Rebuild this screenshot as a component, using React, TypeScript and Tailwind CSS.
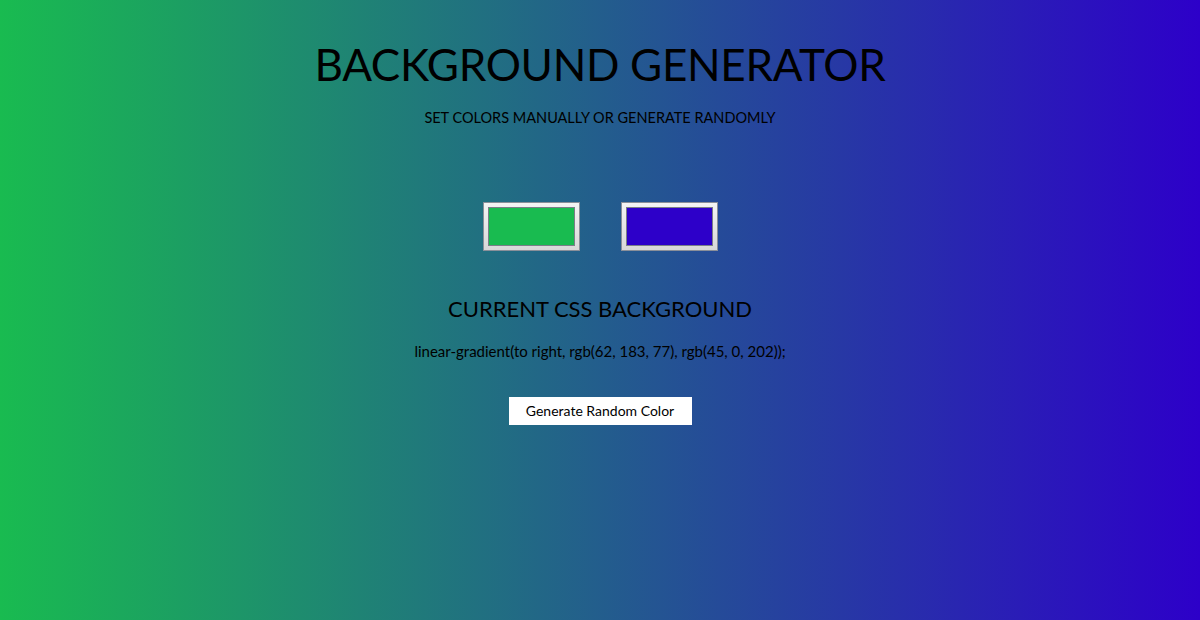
function Swatch({ color }: { color: string }) {
  return (
    <div className="w-[97px] h-[49px] border border-[#8a8f99] bg-gradient-to-b from-[#f4f4f4] to-[#d8d8d8] p-[4px]">
      <div className="w-full h-full border border-[#7a7f88]" style={{ backgroundColor: color }} />
    </div>
  )
}

export default function App() {
  const left = '#19bb50'
  const right = '#2d00c9'

  return (
    <div
      className="w-[1200px] h-[620px] flex flex-col items-center text-black text-center font-['Lato',sans-serif]"
      style={{ background: `linear-gradient(to right, ${left}, ${right})` }}
    >
      <h1 className="mt-[39px] text-[44px] leading-[50px] tracking-[-0.3px]">BACKGROUND GENERATOR</h1>
      <h2 className="mt-[20px] text-[14.5px] leading-[18px]">SET COLORS MANUALLY OR GENERATE RANDOMLY</h2>

      <div className="mt-[75px] flex gap-[41px]">
        <Swatch color={left} />
        <Swatch color={right} />
      </div>

      <h3 className="mt-[44px] text-[22px] leading-[28px]">CURRENT CSS BACKGROUND</h3>
      <p className="mt-[18px] text-[15px] leading-[20px]">linear-gradient(to right, rgb(62, 183, 77), rgb(45, 0, 202));</p>

      <button className="mt-[36px] w-[183px] h-[28px] bg-white text-[14px] leading-[18px]">
        Generate Random Color
      </button>
    </div>
  )
}
